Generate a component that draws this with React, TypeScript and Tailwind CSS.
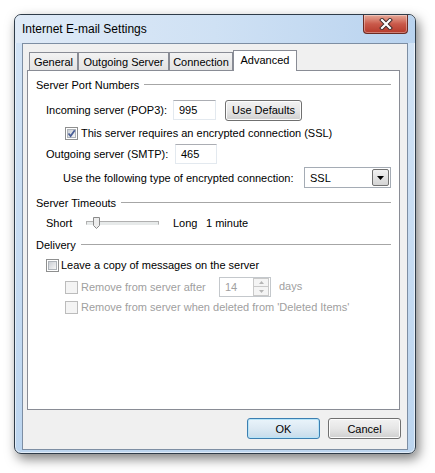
import React from 'react';

const FONT = "font-['Liberation_Sans',Arial,sans-serif] text-[11px] leading-[14px] whitespace-nowrap";

const Checkbox = ({ checked = false, disabled = false }: { checked?: boolean; disabled?: boolean }) => (
  <div
    className={`w-[13px] h-[13px] shrink-0 border p-[1px] ${
      disabled ? 'border-[#bcbcbc] bg-[#f4f4f4]' : 'border-[#8e8f8f] bg-white'
    }`}
  >
    <div
      className={`w-full h-full ${
        disabled ? 'bg-[#f4f4f4]' : 'bg-gradient-to-br from-[#cbcfd5] to-[#f6f6f6] border border-[#aeb3b9]'
      }`}
    >
      {checked && (
        <svg width="9" height="9" viewBox="0 0 9 9" className="-ml-[1px] -mt-[1px]">
          <path d="M1.5 4.5 L3.6 7 L7.8 1.2" stroke="#4a5f97" strokeWidth="1.8" fill="none" />
        </svg>
      )}
    </div>
  </div>
);

const TextBox = ({ value, w }: { value: string; w: string }) => (
  <div
    className={`${w} h-[20px] bg-white border border-[#e3e9ef] border-t-[#abadb3] flex items-center pl-[5px] text-black`}
  >
    {value}
  </div>
);

const Button = ({ label, w, primary = false }: { label: string; w: string; primary?: boolean }) => (
  <div
    className={`${w} h-[21px] rounded-[3px] border flex items-center justify-center text-black ${
      primary
        ? 'border-[#3c7fb1] bg-gradient-to-b from-[#eaf4fb] via-[#dce9f3] to-[#c6dceb] shadow-[inset_0_0_0_1px_#b7e4f8]'
        : 'border-[#707070] bg-gradient-to-b from-[#f2f2f2] via-[#e6e6e6] to-[#cfcfcf] shadow-[inset_0_0_0_1px_#fcfcfc]'
    }`}
  >
    {label}
  </div>
);

const GroupHeader = ({ title }: { title: string }) => (
  <div className="h-[16px] flex items-center gap-[5px]">
    <span className="text-black">{title}</span>
    <div className="flex-1 h-[2px] border-t border-[#a6a6a6] border-b border-b-white" />
  </div>
);

const Tab = ({ label, w, active = false }: { label: string; w: string; active?: boolean }) => (
  <div
    className={`${w} flex items-center justify-center border border-b-0 text-black ${
      active
        ? 'h-[21px] -mb-[1px] bg-white border-[#898c95] relative z-10 pb-[2px]'
        : 'h-[18px] border-[#898c95] bg-gradient-to-b from-[#f3f3f3] to-[#e3e3e3]'
    }`}
  >
    {label}
  </div>
);

export default function App() {
  return (
    <div className={`w-[435px] h-[473px] bg-white pt-[14px] pl-[14px] ${FONT}`}>
      <div className="w-[402px] h-[440px] rounded-[7px] border border-[#2f3c49] bg-gradient-to-b from-[#d3e4f6] to-[#bcd5ef] shadow-[3px_5px_12px_rgba(0,0,0,0.5),inset_0_0_0_1px_rgba(255,255,255,0.55)] flex flex-col overflow-hidden">
        {/* Title bar */}
        <div className="h-[28px] flex items-start bg-gradient-to-r from-[#dfeaf7] via-[#cfe1f4] to-[#b9d3ef] rounded-t-[6px]">
          <div className="flex-1 h-[28px] flex items-center pl-[7px] text-[12px] text-black">Internet E-mail Settings</div>
          <div className="w-[45px] h-[19px] mr-[7px] rounded-b-[4px] border border-t-0 border-[#6b2b23] bg-gradient-to-b from-[#e5a898] via-[#c9594a] to-[#b5392b] shadow-[inset_0_0_0_1px_rgba(255,255,255,0.35)] flex items-center justify-center">
            <svg width="14" height="12" viewBox="0 0 14 12">
              <path d="M3 2 L11 10 M11 2 L3 10" stroke="#3b2a2a" strokeWidth="4" strokeLinecap="square" />
              <path d="M3 2 L11 10 M11 2 L3 10" stroke="#ffffff" strokeWidth="2.2" strokeLinecap="square" />
            </svg>
          </div>
        </div>

        {/* Client area */}
        <div className="mx-[7px] h-[407px] border border-[#7d8ea3] bg-[#f0f0f0] flex flex-col">
          {/* Tabs */}
          <div className="mt-[6px] h-[20px] pl-[6px] flex items-end">
            <Tab label="General" w="w-[49px]" />
            <Tab label="Outgoing Server" w="w-[91px]" />
            <Tab label="Connection" w="w-[64px]" />
            <Tab label="Advanced" w="w-[64px]" active />
          </div>

          {/* Tab panel */}
          <div className="ml-[4px] w-[373px] h-[340px] border border-[#898c95] bg-white flex flex-col px-[8px]">
            <div className="mt-[6px]">
              <GroupHeader title="Server Port Numbers" />
            </div>

            <div className="mt-[7px] h-[20px] flex items-center pl-[10px]">
              <span className="w-[127px] shrink-0">Incoming server (POP3):</span>
              <TextBox value="995" w="w-[43px]" />
              <div className="ml-[9px]">
                <Button label="Use Defaults" w="w-[77px]" />
              </div>
            </div>

            <div className="mt-[3px] h-[20px] flex items-center pl-[29px] gap-[3px]">
              <Checkbox checked />
              <span>This server requires an encrypted connection (SSL)</span>
            </div>

            <div className="mt-[1px] h-[20px] flex items-center pl-[10px]">
              <span className="w-[129px] shrink-0">Outgoing server (SMTP):</span>
              <TextBox value="465" w="w-[42px]" />
            </div>

            <div className="mt-[3px] h-[21px] flex items-center pl-[27px]">
              <span>Use the following type of encrypted connection:</span>
              <div className="ml-auto w-[87px] h-[21px] border border-[#a5acb5] bg-white flex items-center pl-[5px] pr-[1px]">
                <span className="flex-1">SSL</span>
                <div className="w-[17px] h-[17px] border border-[#707070] rounded-[2px] bg-gradient-to-b from-[#f2f2f2] to-[#d4d4d4] flex items-center justify-center">
                  <svg width="7" height="4" viewBox="0 0 7 4">
                    <path d="M0 0 L7 0 L3.5 4 Z" fill="#000" />
                  </svg>
                </div>
              </div>
            </div>

            <div className="mt-[7px]">
              <GroupHeader title="Server Timeouts" />
            </div>

            <div className="mt-[2px] h-[20px] flex items-center pl-[10px]">
              <span className="w-[40px] shrink-0">Short</span>
              <div className="relative w-[73px] h-[14px] flex items-center">
                <div className="w-full h-[4px] border border-[#b0b0b0] border-b-[#e7eaea] bg-[#e7eaea]" />
                <svg width="7" height="12" viewBox="0 0 7 12" className="absolute left-[7px] top-[1px]">
                  <path d="M0.5 0.5 H6.5 V8.5 L3.5 11.5 L0.5 8.5 Z" fill="#ececec" stroke="#8a8a8a" />
                </svg>
              </div>
              <span className="ml-[14px] w-[33px] shrink-0">Long</span>
              <span>1 minute</span>
            </div>

            <div className="mt-[4px]">
              <GroupHeader title="Delivery" />
            </div>

            <div className="mt-[2px] h-[20px] flex items-center pl-[10px] gap-[2px]">
              <Checkbox />
              <span>Leave a copy of messages on the server</span>
            </div>

            <div className="mt-[2px] h-[20px] flex items-center pl-[29px] text-[#a0a0a0]">
              <Checkbox disabled />
              <span className="ml-[3px] w-[138px] shrink-0">Remove from server after</span>
              <div className="w-[52px] h-[20px] border border-[#c4c8cc] bg-white flex items-center pl-[5px] pr-[1px]">
                <span className="flex-1">14</span>
                <div className="w-[16px] h-[18px] flex flex-col">
                  <div className="h-[9px] border border-[#c9c9c9] bg-[#f4f4f4] flex items-center justify-center">
                    <svg width="5" height="3" viewBox="0 0 5 3"><path d="M0 3 L5 3 L2.5 0 Z" fill="#b5b5b5" /></svg>
                  </div>
                  <div className="h-[9px] border border-t-0 border-[#c9c9c9] bg-[#f4f4f4] flex items-center justify-center">
                    <svg width="5" height="3" viewBox="0 0 5 3"><path d="M0 0 L5 0 L2.5 3 Z" fill="#b5b5b5" /></svg>
                  </div>
                </div>
              </div>
              <span className="ml-[8px] -mt-[3px]">days</span>
            </div>

            <div className="h-[20px] flex items-center pl-[29px] text-[#a0a0a0] gap-[3px]">
              <Checkbox disabled />
              <span>Remove from server when deleted from 'Deleted Items'</span>
            </div>
          </div>

          {/* Buttons */}
          <div className="mt-[8px] flex justify-end gap-[8px] pr-[6px]">
            <Button label="OK" w="w-[73px]" primary />
            <Button label="Cancel" w="w-[73px]" />
          </div>
        </div>
      </div>
    </div>
  );
}
